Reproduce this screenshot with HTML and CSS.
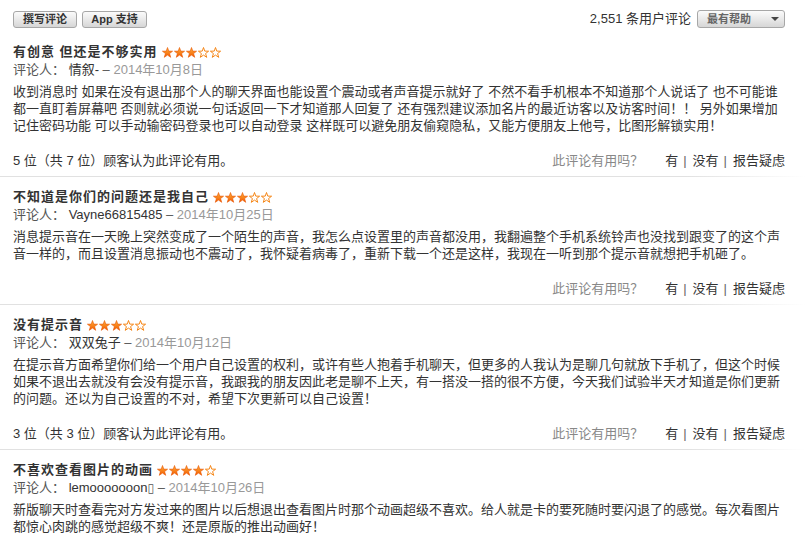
FILE: index.html
```html
<!DOCTYPE html>
<html lang="zh-CN">
<head>
<meta charset="utf-8">
<title>用户评论</title>
<link rel="stylesheet" href="styles.css">
</head>
<body>
<svg class="defs" width="0" height="0" aria-hidden="true">
  <defs>
    <linearGradient id="sg" x1="0" y1="0" x2="0" y2="1">
      <stop offset="0" stop-color="#ffb03a"/>
      <stop offset="1" stop-color="#f25a00"/>
    </linearGradient>
    <symbol id="star" viewBox="0 0 11 11">
      <path d="M5.5 0.5 L6.79 4.12 L10.6 4.2 L7.59 6.58 L8.73 10.35 L5.5 8.1 L2.27 10.35 L3.41 6.58 L0.4 4.2 L4.21 4.12 Z"/>
    </symbol>
  </defs>
</svg>
<div class="page">
  <div class="topbar">
    <div class="btns">
      <span class="btn">撰写评论</span>
      <span class="btn">App 支持</span>
    </div>
    <div class="sortbox">
      <span class="count">2,551 条用户评论</span>
      <span class="select">最有帮助<span class="arrow"></span></span>
    </div>
  </div>

  <div class="reviews">
    <div class="review">
      <h3 class="title"><span class="ttext">有创意 但还是不够实用</span>
        <svg class="stars" width="59" height="11" viewBox="0 0 59 11"><use href="#star" x="0" class="on" width="11" height="11"/><use href="#star" x="12" class="on" width="11" height="11"/><use href="#star" x="24" class="on" width="11" height="11"/><use href="#star" x="36" class="off" width="11" height="11"/><use href="#star" x="48" class="off" width="11" height="11"/></svg>
      </h3>
      <div class="meta">评论人： <span class="name">情叙-</span> – <span class="date">2014年10月8日</span></div>
      <p class="text">收到消息时 如果在没有退出那个人的聊天界面也能设置个震动或者声音提示就好了 不然不看手机根本不知道那个人说话了 也不可能谁都一直盯着屏幕吧 否则就必须说一句话返回一下才知道那人回复了 还有强烈建议添加名片的最近访客以及访客时间！！ 另外如果增加记住密码功能 可以手动输密码登录也可以自动登录 这样既可以避免朋友偷窥隐私，又能方便朋友上他号，比图形解锁实用！</p>
      <div class="helpful">
        <span class="votes">5 位（共 7 位）顾客认为此评论有用。</span>
        <span class="ask"><span class="q">此评论有用吗？</span><span class="links">有<span class="bar">|</span>没有<span class="bar">|</span>报告疑虑</span></span>
      </div>
      <div class="divider"></div>
    </div>

    <div class="review">
      <h3 class="title"><span class="ttext">不知道是你们的问题还是我自己</span>
        <svg class="stars" width="59" height="11" viewBox="0 0 59 11"><use href="#star" x="0" class="on" width="11" height="11"/><use href="#star" x="12" class="on" width="11" height="11"/><use href="#star" x="24" class="on" width="11" height="11"/><use href="#star" x="36" class="off" width="11" height="11"/><use href="#star" x="48" class="off" width="11" height="11"/></svg>
      </h3>
      <div class="meta">评论人： <span class="name">Vayne66815485</span> – <span class="date">2014年10月25日</span></div>
      <p class="text">消息提示音在一天晚上突然变成了一个陌生的声音，我怎么点设置里的声音都没用，我翻遍整个手机系统铃声也没找到跟变了的这个声音一样的，而且设置消息振动也不震动了，我怀疑着病毒了，重新下载一个还是这样，我现在一听到那个提示音就想把手机砸了。</p>
      <div class="helpful">
        <span class="votes"></span>
        <span class="ask"><span class="q">此评论有用吗？</span><span class="links">有<span class="bar">|</span>没有<span class="bar">|</span>报告疑虑</span></span>
      </div>
      <div class="divider"></div>
    </div>

    <div class="review">
      <h3 class="title"><span class="ttext">没有提示音</span>
        <svg class="stars" width="59" height="11" viewBox="0 0 59 11"><use href="#star" x="0" class="on" width="11" height="11"/><use href="#star" x="12" class="on" width="11" height="11"/><use href="#star" x="24" class="on" width="11" height="11"/><use href="#star" x="36" class="off" width="11" height="11"/><use href="#star" x="48" class="off" width="11" height="11"/></svg>
      </h3>
      <div class="meta">评论人： <span class="name">双双兔子</span> – <span class="date">2014年10月12日</span></div>
      <p class="text">在提示音方面希望你们给一个用户自己设置的权利，或许有些人抱着手机聊天，但更多的人我认为是聊几句就放下手机了，但这个时候如果不退出去就没有会没有提示音，我跟我的朋友因此老是聊不上天，有一搭没一搭的很不方便，今天我们试验半天才知道是你们更新的问题。还以为自己设置的不对，希望下次更新可以自己设置！</p>
      <div class="helpful">
        <span class="votes">3 位（共 3 位）顾客认为此评论有用。</span>
        <span class="ask"><span class="q">此评论有用吗？</span><span class="links">有<span class="bar">|</span>没有<span class="bar">|</span>报告疑虑</span></span>
      </div>
      <div class="divider"></div>
    </div>

    <div class="review">
      <h3 class="title"><span class="ttext">不喜欢查看图片的动画</span>
        <svg class="stars" width="59" height="11" viewBox="0 0 59 11"><use href="#star" x="0" class="on" width="11" height="11"/><use href="#star" x="12" class="on" width="11" height="11"/><use href="#star" x="24" class="on" width="11" height="11"/><use href="#star" x="36" class="on" width="11" height="11"/><use href="#star" x="48" class="off" width="11" height="11"/></svg>
      </h3>
      <div class="meta">评论人： <span class="name">lemooooooon<span class="tofu">▯</span></span> – <span class="date">2014年10月26日</span></div>
      <p class="text">新版聊天时查看完对方发过来的图片以后想退出查看图片时那个动画超级不喜欢。给人就是卡的要死随时要闪退了的感觉。每次看图片都惊心肉跳的感觉超级不爽！还是原版的推出动画好！</p>
    </div>
  </div>
</div>
</body>
</html>
```

FILE: styles.css
```css
html, body {
  margin: 0;
  padding: 0;
  background: #fff;
}

body {
  font-family: "Liberation Sans", "Noto Sans CJK SC", sans-serif;
  font-size: 13px;
  line-height: 18px;
  color: #333;
  overflow: hidden;
}

.defs {
  position: absolute;
  width: 0;
  height: 0;
}

.page {
  padding: 10px 21px 0 13px;
}

.topbar {
  display: flex;
  justify-content: space-between;
  align-items: center;
  height: 18px;
}

.btns {
  display: flex;
  gap: 5px;
}

.btn {
  display: block;
  box-sizing: border-box;
  width: 64px;
  height: 17px;
  border: 1px solid #a7a7a7;
  border-radius: 3px;
  background: linear-gradient(#fbfbfb, #e9e9e9 50%, #d6d6d6);
  font-size: 11px;
  font-weight: bold;
  line-height: 15px;
  text-align: center;
  color: #333;
}

.btns .btn + .btn {
  width: 65px;
}

.sortbox {
  display: flex;
  align-items: center;
  gap: 6px;
}

.count {
  font-size: 13px;
  color: #333;
}

.select {
  display: flex;
  align-items: center;
  justify-content: space-between;
  box-sizing: border-box;
  width: 88px;
  height: 18px;
  padding: 0 5px 0 9px;
  border: 1px solid #a7a7a7;
  border-radius: 3px;
  background: linear-gradient(#fbfbfb, #e9e9e9 50%, #d6d6d6);
  font-size: 11px;
  font-weight: bold;
  color: #666;
}

.arrow {
  width: 0;
  height: 0;
  border-left: 4px solid transparent;
  border-right: 4px solid transparent;
  border-top: 4px solid #444;
}

.reviews {
  margin-top: 15px;
}

.title {
  display: flex;
  align-items: center;
  margin: 0;
  font-size: 13px;
  line-height: 18px;
  font-weight: bold;
  color: #333;
}

.ttext {
  letter-spacing: 1px;
}

.stars {
  margin-left: 4px;
  display: block;
}

.stars .on {
  fill: url(#sg);
  stroke: #e85400;
  stroke-width: 0.6;
}

.stars .off {
  fill: #fff;
  stroke: #f47a00;
  stroke-width: 0.9;
}

.meta {
  line-height: 18px;
  color: #555;
}

.name {
  color: #333;
}

.tofu {
  font-family: "DejaVu Sans", sans-serif;
  font-size: 12px;
  color: #555;
}

.date {
  color: #999;
}

.text {
  margin: 4px 0 0;
  line-height: 17px;
  color: #333;
}

.helpful {
  display: flex;
  justify-content: space-between;
  margin-top: 18px;
  line-height: 18px;
}

.votes {
  color: #333;
}

.ask {
  display: flex;
}

.q {
  color: #888;
  margin-right: 22px;
}

.links {
  color: #333;
}

.bar {
  color: #666;
  margin: 0 6px 0 5px;
}

.divider {
  height: 1px;
  margin: 6px -21px 11px -13px;
  background: linear-gradient(to right, #e1e1e1 0%, #e1e1e1 85%, rgba(225, 225, 225, 0) 100%);
}
```
